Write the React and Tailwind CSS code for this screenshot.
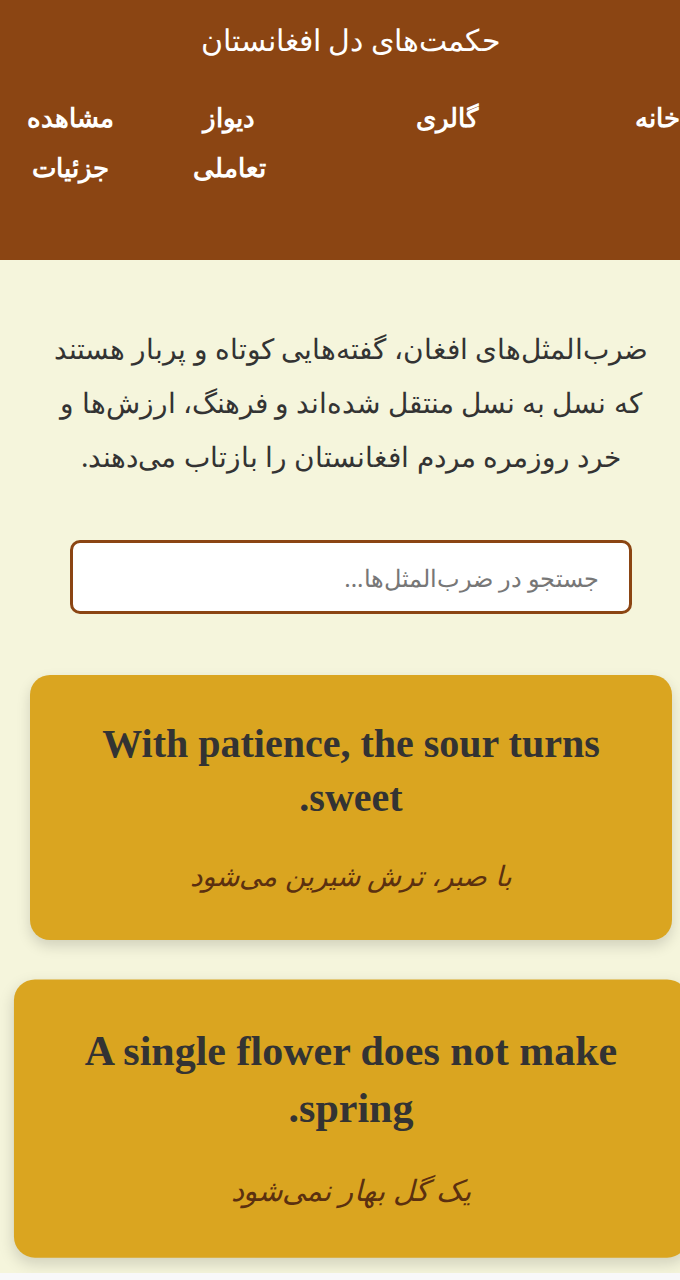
import React from "react";

const proverbs = [
  { en: "With patience, the sour turns sweet.", fa: "با صبر، ترش شیرین می‌شود", hover: false },
  { en: "A single flower does not make spring.", fa: "یک گل بهار نمی‌شود", hover: true },
];

export default function App() {
  return (
    <div className="w-[702px] bg-[#f5f5dc] min-h-[1280px] font-['Noto_Sans',sans-serif]" dir="rtl">
      <header className="bg-[#8b4513] text-white h-[260px] flex flex-col">
        <h1 className="text-center text-[30px] leading-[40px] font-normal mt-[20px]">حکمت‌های دل افغانستان</h1>
        <nav className="mt-[32px]">
          <ul className="flex pr-[12px] text-[26px] leading-[50px] font-bold">
            <li className="w-[65px] text-center shrink-0">خانه</li>
            <li className="w-[62px] mr-[147px] text-center shrink-0">گالری</li>
            <li className="w-[78px] mr-[148px] text-center shrink-0">دیواز تعاملی</li>
            <li className="w-[90px] mr-[75px] text-center shrink-0">مشاهده جزئیات</li>
          </ul>
        </nav>
      </header>

      <main className="flex flex-col items-center">
        <p className="mt-[61px] w-[612px] text-center text-[28px] leading-[54px] text-[#333]">
          ضرب‌المثل‌های افغان، گفته‌هایی کوتاه و پربار هستند که نسل به نسل منتقل شده‌اند و فرهنگ، ارزش‌ها و خرد روزمره مردم افغانستان را بازتاب می‌دهند.
        </p>

        <input
          type="text"
          placeholder="جستجو در ضرب‌المثل‌ها..."
          className="mt-[57px] w-[562px] h-[74px] bg-white border-[3px] border-[#8b4513] rounded-[10px] pr-[30px] text-[24px] placeholder:text-[#777] outline-none"
        />

        <div className="mt-[61px] flex flex-col gap-[46px] w-[642px]">
          {proverbs.map((p, i) => (
            <div
              key={i}
              className={
                "bg-[#daa520] rounded-[20px] shadow-[0_6px_14px_rgba(0,0,0,0.15)] h-[265px] px-[40px] pt-[42px] text-center " +
                (p.hover ? "scale-[1.05]" : "")
              }
            >
              <h3 className="font-['Liberation_Serif',serif] font-bold text-[40px] leading-[53.5px] text-[#333]">{p.en}</h3>
              <p className="mt-[31px] italic text-[28px] leading-[40px] text-[#5b3010]">{p.fa}</p>
            </div>
          ))}
        </div>
      </main>
      <div className="fixed bottom-0 left-0 w-full h-[7px] bg-[#f8f8fa]"></div>
    </div>
  );
}
